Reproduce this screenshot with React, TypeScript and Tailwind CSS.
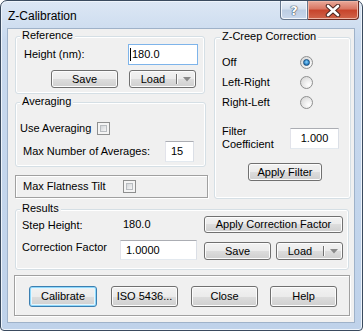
import React from "react";

const Btn = ({ className = "", children, def = false }: { className?: string; children: React.ReactNode; def?: boolean }) => (
  <div
    className={
      "flex items-center justify-center rounded-[3px] border text-black " +
      (def
        ? "border-[#3c7fb1] bg-[linear-gradient(#f2f2f2_0%,#ebebeb_50%,#dddddd_50%,#cfcfcf_100%)] shadow-[inset_0_0_0_1px_#8fd8fb,inset_0_0_0_2px_#e6f5fc] "
        : "border-[#707070] bg-[linear-gradient(#f2f2f2_0%,#ebebeb_50%,#dddddd_50%,#cfcfcf_100%)] shadow-[inset_0_0_0_1px_#fcfcfc] ") +
      className
    }
  >
    {children}
  </div>
);

const SplitBtn = ({ className = "" }: { className?: string }) => (
  <div
    className={
      "flex items-stretch rounded-[3px] border border-[#707070] bg-[linear-gradient(#f2f2f2_0%,#ebebeb_50%,#dddddd_50%,#cfcfcf_100%)] shadow-[inset_0_0_0_1px_#fcfcfc] text-black " +
      className
    }
  >
    <div className="flex w-[46px] items-center justify-center">Load</div>
    <div className="my-[3px] w-px bg-[#707070]" />
    <div className="my-[3px] w-px bg-[#fafafa]" />
    <div className="flex flex-1 items-center justify-center">
      <svg width="8" height="5" viewBox="0 0 8 5">
        <path d="M0 0 H8 L4 4.5 Z" fill="#8a8a8a" />
      </svg>
    </div>
  </div>
);

const Input = ({ className = "", children, focus = false }: { className?: string; children?: React.ReactNode; focus?: boolean }) => (
  <div
    className={
      "flex items-center bg-white text-black border " +
      (focus
        ? "border-[#7eb4ea] "
        : "border-t-[#abadb3] border-l-[#e2e3ea] border-r-[#dbdfe6] border-b-[#e3e9ef] ") +
      className
    }
  >
    {children}
  </div>
);

const Check = ({ className = "" }: { className?: string }) => (
  <div className={"h-[13px] w-[13px] shrink-0 border border-[#8e8f8f] bg-[#f4f4f4] p-[2px] " + className}>
    <div className="h-full w-full border border-[#b8bcc0] bg-[linear-gradient(135deg,#d2d5d9,#f6f6f6)]" />
  </div>
);

const Radio = ({ on = false }: { on?: boolean }) => (
  <div className="flex h-[13px] w-[13px] shrink-0 items-center justify-center rounded-full border border-[#8e8f8f] bg-[radial-gradient(circle_at_70%_70%,#ffffff,#e4e4e4_60%,#d0d0d0)]">
    {on && (
      <div className="h-[7px] w-[7px] rounded-full border border-[#1c5180] bg-[radial-gradient(circle_at_50%_40%,#8cd4ff,#2e86c9_60%,#14508a)]" />
    )}
  </div>
);

const Group = ({
  label,
  className = "",
  legendClass = "left-[4px]",
  children,
}: {
  label: string;
  className?: string;
  legendClass?: string;
  children?: React.ReactNode;
}) => (
  <div className={"relative flex flex-col rounded-[3px] border border-[#d5dfe5] shadow-[inset_0_0_0_1px_#ffffff] " + className}>
    <span className={"absolute top-[-8px] bg-[#f0f0f0] px-[2px] leading-[13px] " + legendClass}>{label}</span>
    {children}
  </div>
);

export default function App() {
  return (
    <div className="font-['Liberation_Sans',Arial,sans-serif] text-[11px] leading-[13px] text-black">
      <div className="flex h-[331px] w-[363px] flex-col rounded-t-[7px] rounded-b-[4px] border border-[#3a4a5e] bg-[linear-gradient(#dce7f4,#c8d9ee_12%,#bfd2ea)] shadow-[inset_0_0_0_1px_#eef4fb]">
        {/* Title bar */}
        <div className="flex h-[28px] items-start">
          <span className="ml-[7px] mt-[8px] text-[12px] leading-[14px] text-black">Z-Calibration</span>
          <div className="ml-auto mr-[3px] flex">
            <div className="flex h-[19px] w-[28px] items-center justify-center rounded-bl-[4px] border border-t-0 border-[#66778d] bg-[linear-gradient(#eaf0f8,#d3dfee_45%,#bccde3_50%,#c9d8ec)] shadow-[inset_0_0_0_1px_#f3f7fc]">
              <span className="font-['DejaVu_Sans',sans-serif] text-[13px] font-bold leading-[13px] text-white [text-shadow:0_0_1px_#3a4656,0_0_1px_#3a4656,0_0_1px_#3a4656]">?</span>
            </div>
            <div className="flex h-[19px] w-[51px] items-center justify-center rounded-br-[4px] border border-l-0 border-t-0 border-[#6b2b22] bg-[linear-gradient(#e9a99a,#d87561_45%,#c7432b_50%,#d0654b)] shadow-[inset_0_0_0_1px_#eeb4a4]">
              <svg width="16" height="13" viewBox="0 0 16 13">
                <path d="M3 2 L13 11 M13 2 L3 11" stroke="#4a2520" strokeWidth="4.5" strokeLinecap="round" />
                <path d="M3 2 L13 11 M13 2 L3 11" stroke="#ffffff" strokeWidth="2.6" strokeLinecap="round" />
              </svg>
            </div>
          </div>
        </div>

        {/* Client area */}
        <div className="ml-[7px] flex h-[293px] w-[346px] flex-col bg-[#f0f0f0] shadow-[0_0_0_1px_#9fb2c9]">
          <div className="ml-[7px] mt-[7px] flex">
            <div className="flex w-[190px] flex-col">
              <Group label="Reference" className="h-[58px] w-[190px]">
                <div className="mt-[7px] flex h-[21px] items-center">
                  <span className="ml-[8px]">Height (nm):</span>
                  <Input focus className="ml-auto mr-[6px] h-[21px] w-[70px] pl-[1px]">
                    <span className="h-[13px] w-px bg-black" />
                    <span className="ml-[1px]">180.0</span>
                  </Input>
                </div>
                <div className="mt-[5px] flex">
                  <Btn className="ml-[35px] h-[18px] w-[67px]">Save</Btn>
                  <SplitBtn className="ml-[11px] h-[18px] w-[67px]" />
                </div>
              </Group>

              <Group label="Averaging" className="mt-[8px] h-[65px] w-[191px]">
                <div className="mt-[19px] flex h-[13px] items-center">
                  <span className="ml-[4px] w-[77px]">Use Averaging</span>
                  <Check />
                </div>
                <div className="mt-[6px] flex h-[21px] items-center">
                  <span className="ml-[7px]">Max Number of Averages:</span>
                  <Input className="ml-auto mr-[11px] h-[21px] w-[29px] pl-[5px]">15</Input>
                </div>
              </Group>

              <div className="mt-[8px] flex h-[23px] w-[193px] items-center border border-[#a0a0a0] shadow-[inset_1px_1px_0_#ffffff,1px_1px_0_#ffffff]">
                <span className="ml-[7px] w-[100px]">Max Flatness Tilt</span>
                <Check />
              </div>
            </div>

            <Group label="Z-Creep Correction" legendClass="left-[5px]" className="ml-[9px] mt-[1px] h-[162px] w-[137px]">
              <div className="mt-[18px] flex flex-col gap-[7px]">
                {[
                  ["Off", true],
                  ["Left-Right", false],
                  ["Right-Left", false],
                ].map(([l, on]) => (
                  <div key={l as string} className="flex h-[13px] items-center">
                    <span className="ml-[7px] w-[78px]">{l as string}</span>
                    <Radio on={on as boolean} />
                  </div>
                ))}
              </div>
              <div className="mt-[16px] flex h-[26px] items-center">
                <span className="ml-[7px] w-[68px] leading-[13px]">
                  Filter
                  <br />
                  Coefficient
                </span>
                <Input className="h-[21px] w-[49px] justify-center">1.000</Input>
              </div>
              <Btn className="ml-[33px] mt-[12px] h-[18px] w-[74px]">Apply Filter</Btn>
            </Group>
          </div>

          <Group label="Results" className="ml-[7px] mt-[10px] h-[61px] w-[334px]">
            <div className="mt-[6px] flex h-[17px] items-start">
              <span className="ml-[6px] mt-[3px] w-[101px]">Step Height:</span>
              <span className="mt-[2px] w-[81px]">180.0</span>
              <Btn className="h-[17px] w-[139px]">Apply Correction Factor</Btn>
            </div>
            <div className="mt-[7px] flex h-[20px] items-start">
              <span className="ml-[6px] mt-[1px] w-[98px]">Correction Factor</span>
              <Input className="h-[20px] w-[77px] pl-[5px]">1.0000</Input>
              <Btn className="ml-[7px] mt-[2px] h-[18px] w-[67px]">Save</Btn>
              <SplitBtn className="ml-[5px] mt-[2px] h-[18px] w-[67px]" />
            </div>
          </Group>

          <div className="ml-[6px] mt-[5px] flex h-[41px] w-[336px] items-start border border-[#a0a0a0] shadow-[inset_1px_1px_0_#ffffff,1px_1px_0_#ffffff]">
            <Btn def className="ml-[14px] mt-[10px] h-[21px] w-[68px]">Calibrate</Btn>
            <Btn className="ml-[14px] mt-[10px] h-[21px] w-[67px]">ISO 5436...</Btn>
            <Btn className="ml-[13px] mt-[10px] h-[21px] w-[67px]">Close</Btn>
            <Btn className="ml-[12px] mt-[10px] h-[21px] w-[67px]">Help</Btn>
          </div>
        </div>
      </div>
    </div>
  );
}
